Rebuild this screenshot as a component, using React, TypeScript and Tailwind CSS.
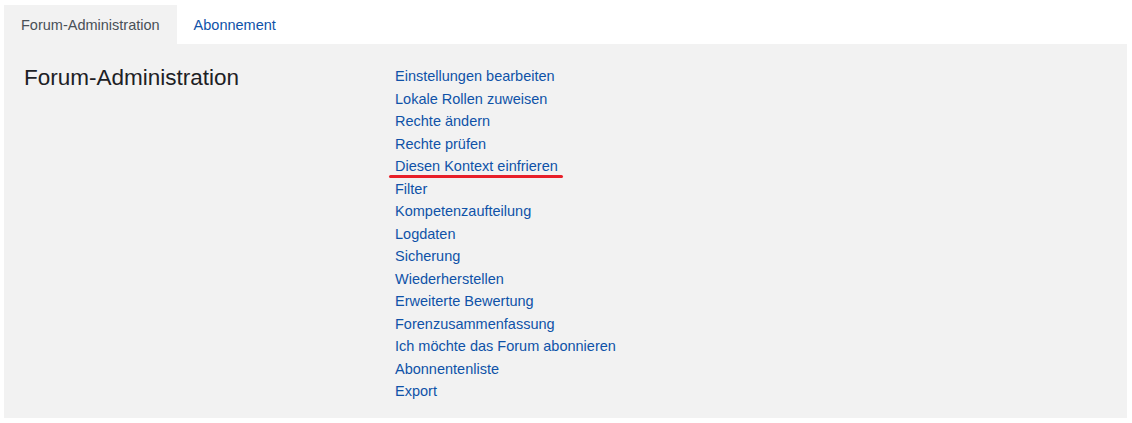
import React from "react";

const links = [
  "Einstellungen bearbeiten",
  "Lokale Rollen zuweisen",
  "Rechte ändern",
  "Rechte prüfen",
  "Diesen Kontext einfrieren",
  "Filter",
  "Kompetenzaufteilung",
  "Logdaten",
  "Sicherung",
  "Wiederherstellen",
  "Erweiterte Bewertung",
  "Forenzusammenfassung",
  "Ich möchte das Forum abonnieren",
  "Abonnentenliste",
  "Export",
];

export default function App() {
  return (
    <div
      className="min-h-[423px] bg-white pt-[5px] pl-[4px] pr-[5px]"
      style={{ fontFamily: '"Liberation Sans", Arial, sans-serif' }}
    >
      {/* tabs */}
      <div className="flex h-[39px] items-center text-[14.5px]">
        <div className="flex h-full items-center bg-[#f2f2f2] px-[17px] pt-[2px] text-[#495057]">
          Forum-Administration
        </div>
        <a href="#" className="flex h-full items-center px-[17px] pt-[2px] text-[#0f52a8]">
          Abonnement
        </a>
      </div>

      {/* panel */}
      <div className="flex bg-[#f2f2f2] pl-[20px] pt-[21px] pb-[15px]">
        <h2 className="mt-[-1px] w-[371px] shrink-0 text-[22.5px] leading-[27px] text-[#1d2125]">
          Forum-Administration
        </h2>
        <ul className="flex flex-col text-[14.5px] leading-[22.5px]">
          {links.map((l) => (
            <li key={l} className="relative">
              <a href="#" className="text-[#0f52a8]">
                {l}
              </a>
              {l === "Diesen Kontext einfrieren" && (
                <span className="absolute left-[-6px] top-[20px] h-[3px] w-[174px] rounded-full bg-[#e8202a]" />
              )}
            </li>
          ))}
        </ul>
      </div>
    </div>
  );
}
